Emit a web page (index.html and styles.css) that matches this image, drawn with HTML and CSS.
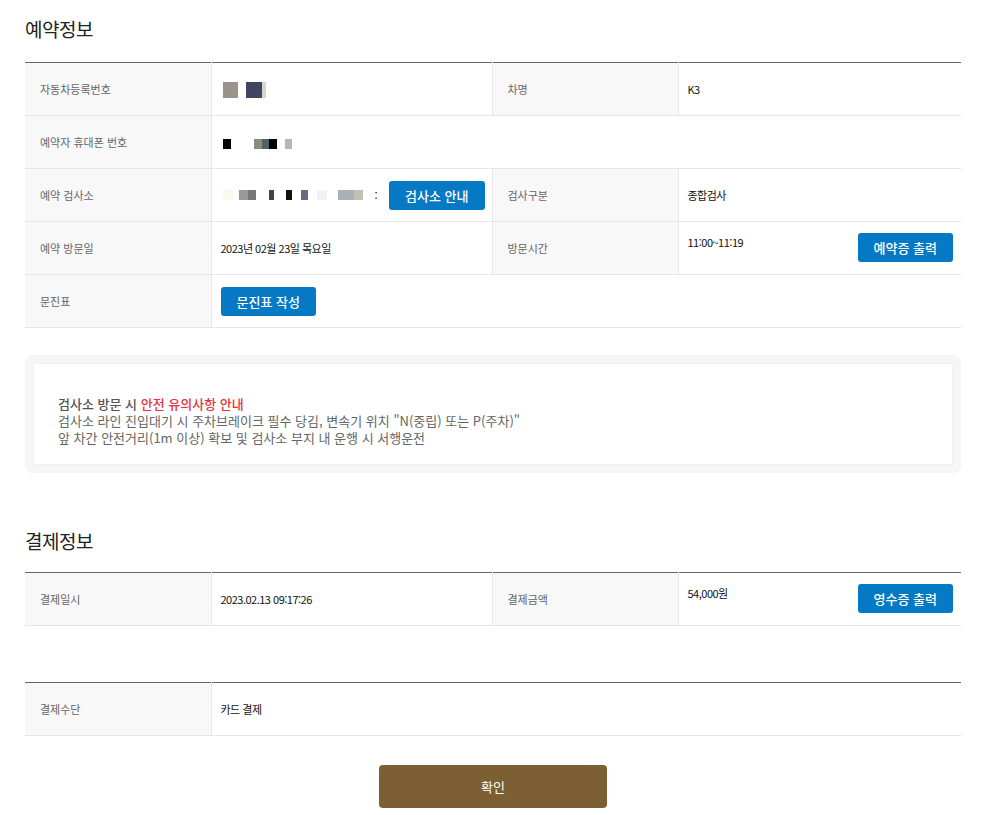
FILE: index.html
```html
<!DOCTYPE html>
<html lang="ko">
<head>
    <meta charset="UTF-8">
    <meta name="viewport" content="width=device-width, initial-scale=1.0">
    <title>예약정보</title>
    <link rel="stylesheet" href="styles.css">
</head>
<body>

<div class="reserve-wrap">

    <!-- 예약정보 -->
    <h2 class="sec-title">예약정보</h2>
    <table class="info-table">
        <colgroup>
            <col class="col-th">
            <col class="col-td">
            <col class="col-th">
            <col class="col-td2">
        </colgroup>
        <tr>
            <th>자동차등록번호</th>
            <td>
                <svg class="mask" width="45" height="16" viewBox="0 0 45 16">
                    <rect x="0" y="0" width="15" height="16" fill="#9a938a"/>
                    <rect x="23" y="0" width="16" height="16" fill="#3f4562"/>
                    <rect x="39" y="0" width="4" height="16" fill="#d6d6cc"/>
                </svg>
            </td>
            <th>차명</th>
            <td>K3</td>
        </tr>
        <tr>
            <th>예약자 휴대폰 번호</th>
            <td colspan="3">
                <svg class="mask" width="70" height="10" viewBox="0 0 70 10">
                    <rect x="0" y="0" width="8" height="10" fill="#000"/>
                    <rect x="31" y="0" width="8" height="10" fill="#8f8a80"/>
                    <rect x="39" y="0" width="7" height="10" fill="#4f6366"/>
                    <rect x="46" y="0" width="8" height="10" fill="#000"/>
                    <rect x="62" y="0" width="7" height="10" fill="#b5b8a8"/>
                </svg>
            </td>
        </tr>
        <tr>
            <th>예약 검사소</th>
            <td class="td-nowrap">
                <svg class="mask" width="150" height="10" viewBox="0 0 150 10">
                    <rect x="0" y="0" width="10" height="10" fill="#fbf9ee"/>
                    <rect x="16" y="0" width="9" height="10" fill="#999"/>
                    <rect x="25" y="0" width="8" height="10" fill="#777"/>
                    <rect x="46" y="0" width="5" height="10" fill="#444"/>
                    <rect x="63" y="0" width="6" height="10" fill="#111"/>
                    <rect x="78" y="0" width="7" height="10" fill="#6b6a82"/>
                    <rect x="94" y="0" width="10" height="10" fill="#eef3f8"/>
                    <rect x="115" y="0" width="16" height="10" fill="#aab0b5"/>
                    <rect x="131" y="0" width="9" height="10" fill="#c3bfb3"/>
                </svg><span class="colon">:</span><button class="btn-blue btn-inline">검사소 안내</button>
            </td>
            <th>검사구분</th>
            <td>종합검사</td>
        </tr>
        <tr>
            <th>예약 방문일</th>
            <td>2023년 02월 23일 목요일</td>
            <th>방문시간</th>
            <td class="td-btn">
                <button class="btn-blue btn-right">예약증 출력</button>
                <span>11:00~11:19</span>
            </td>
        </tr>
        <tr>
            <th>문진표</th>
            <td colspan="3">
                <button class="btn-blue">문진표 작성</button>
            </td>
        </tr>
    </table>

    <!-- 안내 박스 -->
    <div class="notice-box">
        <div class="notice-inner">
            <p class="notice-head">검사소 방문 시 <span class="red">안전 유의사항 안내</span></p>
            <p>검사소 라인 진입대기 시 주차브레이크 필수 당김, 변속기 위치 "N(중립) 또는 P(주차)"</p>
            <p>앞 차간 안전거리(1m 이상) 확보 및 검사소 부지 내 운행 시 서행운전</p>
        </div>
    </div>

    <!-- 결제정보 -->
    <h2 class="sec-title sec-title-pay">결제정보</h2>
    <table class="info-table">
        <colgroup>
            <col class="col-th">
            <col class="col-td">
            <col class="col-th">
            <col class="col-td2">
        </colgroup>
        <tr>
            <th>결제일시</th>
            <td>2023.02.13 09:17:26</td>
            <th>결제금액</th>
            <td class="td-btn">
                <button class="btn-blue btn-right">영수증 출력</button>
                <span>54,000원</span>
            </td>
        </tr>
    </table>

    <table class="info-table table-method">
        <colgroup>
            <col class="col-th">
            <col>
        </colgroup>
        <tr>
            <th>결제수단</th>
            <td>카드 결제</td>
        </tr>
    </table>

    <div class="btn-area">
        <button class="btn-confirm">확인</button>
    </div>

</div>

</body>
</html>
```

FILE: styles.css
```css
/* 기본 */
* {
    box-sizing: border-box;
}

body {
    margin: 0;
    background: #fff;
    font-family: "Noto Sans CJK KR", "Noto Sans", sans-serif;
    color: #222;
}

p {
    margin: 0;
}

.reserve-wrap {
    width: 936px;
    margin-left: 25px;
    padding-top: 16px;
}

/* 제목 */
.sec-title {
    margin: 0 0 20px;
    font-size: 19px;
    line-height: 26px;
    font-weight: 400;
    color: #222;
    letter-spacing: -0.5px;
}

.sec-title-pay {
    margin-top: 55px;
    margin-bottom: 18px;
}

/* 테이블 */
.info-table {
    width: 100%;
    border-collapse: collapse;
    table-layout: fixed;
    border-top: 1px solid #666;
}

.col-th {
    width: 186px;
}

.col-td {
    width: 281px;
}

.info-table th,
.info-table td {
    height: 53px;
    border-bottom: 1px solid #e6e6e6;
    font-size: 11px;
    text-align: left;
    vertical-align: middle;
}

.info-table th {
    padding: 0 15px;
    background: #f8f8f8;
    color: #666;
    font-weight: 400;
    border-right: 1px solid #e8e8e8;
}

.info-table td {
    padding: 0 9px;
    color: #111;
    letter-spacing: -0.5px;
}

.info-table td + th {
    border-left: 1px solid #e8e8e8;
}

.td-nowrap {
    white-space: nowrap;
    padding-right: 0 !important;
}

.mask {
    display: inline-block;
    vertical-align: middle;
    margin-left: 2px;
}

.colon {
    display: inline-block;
    margin-left: 2px;
    vertical-align: middle;
    font-size: 11px;
}

/* 버튼 */
.btn-blue {
    height: 29px;
    padding: 0 16px;
    border: 0;
    border-radius: 3px;
    background: #0579c4;
    color: #fff;
    font-family: inherit;
    font-size: 13px;
    font-weight: 500;
    cursor: pointer;
}

.btn-inline {
    margin-left: 12px;
    vertical-align: middle;
}

.td-btn {
    vertical-align: top !important;
    padding-top: 11px !important;
    padding-right: 8px !important;
}

.td-btn span {
    display: inline-block;
    line-height: 18px;
}

.btn-right {
    float: right;
}

.table-method {
    margin-top: 56px;
}

/* 안내 박스 */
.notice-box {
    margin-top: 27px;
    padding: 8px;
    background: #f6f6f6;
    border-radius: 7px;
}

.notice-inner {
    padding: 31px 24px 18px;
    background: #fff;
    border: 1px solid #f0f0f0;
    border-radius: 2px;
    font-size: 13px;
    line-height: 17px;
    color: #666;
}

.notice-head {
    color: #555;
    font-weight: 500;
}

.notice-head .red {
    color: #e8323f;
}

/* 확인 */
.btn-area {
    margin-top: 29px;
    text-align: center;
}

.btn-confirm {
    width: 228px;
    height: 43px;
    border: 0;
    border-radius: 4px;
    background: #7d5f34;
    color: #fff;
    font-family: inherit;
    font-size: 13px;
    cursor: pointer;
}
```
